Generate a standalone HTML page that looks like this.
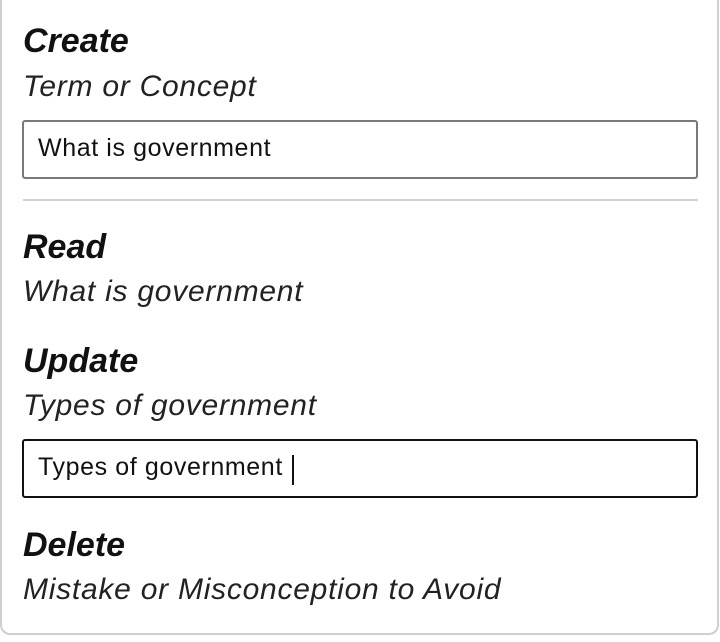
<!DOCTYPE html>
<html><head><meta charset="utf-8"><style>
body{margin:0;width:720px;height:642px;background:#fff;position:relative;overflow:hidden;font-family:"Liberation Sans",sans-serif}
.card{position:absolute;left:0;top:-10px;width:719px;height:645px;border:2px solid #cfcfcf;border-radius:10px;box-sizing:border-box}
.t{position:absolute;left:23px;line-height:1;white-space:nowrap}
.h{font-size:34px;font-weight:bold;font-style:italic;color:#111}
.s{font-size:30px;font-style:italic;color:#222;letter-spacing:0.75px}
.in{position:absolute;left:22px;width:676px;height:59px;box-sizing:border-box;border-radius:3px;background:#fff}
.in span{position:absolute;left:14px;top:14px;font-size:25px;line-height:1;letter-spacing:0.6px;color:#111}
</style></head><body>
<div class="card"></div>
<div class="t h" style="top:24px">Create</div>
<div class="t s" style="top:72px">Term or Concept</div>
<div class="in" style="top:120px;border:2px solid #7a7a7a"><span>What is government</span></div>
<div style="position:absolute;left:23px;top:199px;width:675px;height:2px;background:#d0d0d0"></div>
<div class="t h" style="top:230px">Read</div>
<div class="t s" style="top:277px">What is government</div>
<div class="t h" style="top:344px">Update</div>
<div class="t s" style="top:391px">Types of government</div>
<div class="in" style="top:439px;border:2px solid #111"><span>Types of government</span><div style="position:absolute;left:268px;top:14px;width:2px;height:30px;background:#111"></div></div>
<div class="t h" style="top:528px">Delete</div>
<div class="t s" style="top:575px">Mistake or Misconception to Avoid</div>
</body></html>
